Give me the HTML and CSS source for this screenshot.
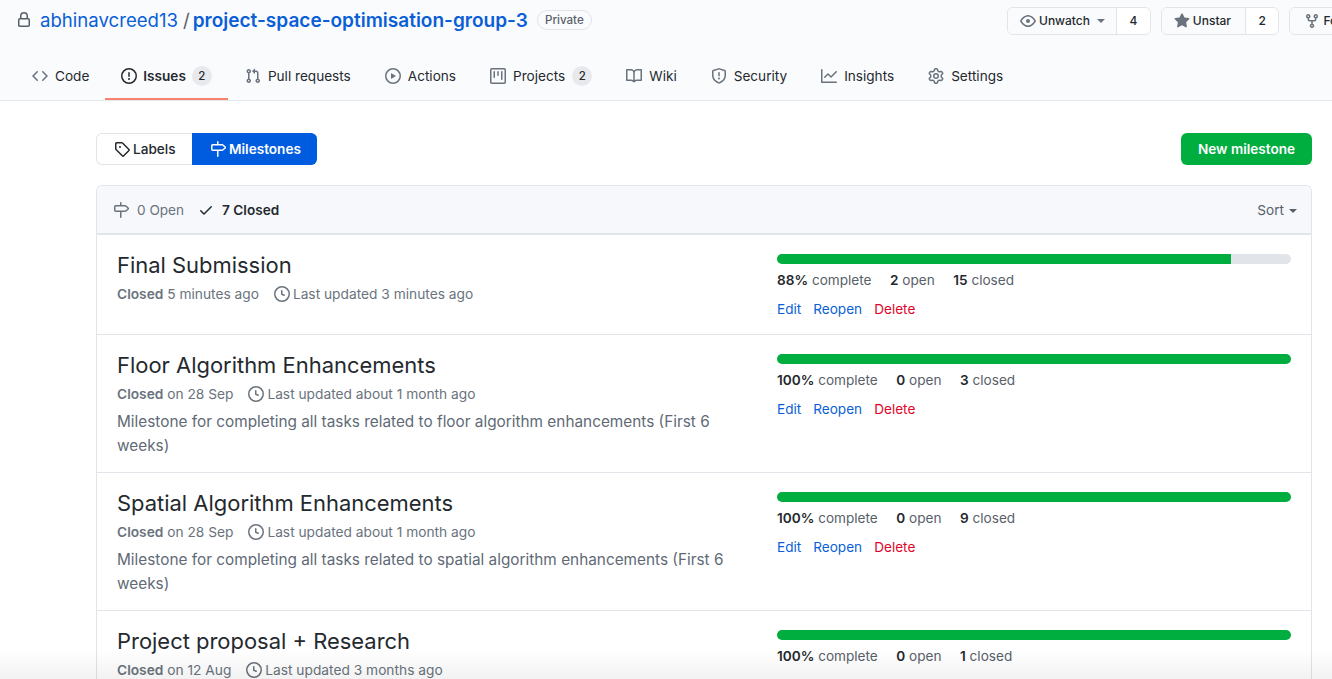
FILE: index.html
```html
<!DOCTYPE html>
<html lang="en">
<head>
    <meta charset="UTF-8">
    <meta name="viewport" content="width=device-width, initial-scale=1.0">
    <title>Milestones</title>
    <link rel="stylesheet" href="styles.css">
</head>
<body>
    <svg class="sprites" width="0" height="0">
        <symbol id="i-lock" viewBox="0 0 16 16"><path fill-rule="evenodd" d="M4 4v2h-.25A1.75 1.75 0 002 7.75v5.5c0 .966.784 1.75 1.75 1.75h8.5A1.75 1.75 0 0014 13.25v-5.5A1.75 1.75 0 0012.25 6H12V4a4 4 0 10-8 0zm6.5 2V4a2.5 2.5 0 00-5 0v2h5zM12 7.5h.25a.25.25 0 01.25.25v5.5a.25.25 0 01-.25.25h-8.5a.25.25 0 01-.25-.25v-5.5a.25.25 0 01.25-.25H12z"/></symbol>
        <symbol id="i-code" viewBox="0 0 16 16"><path fill-rule="evenodd" d="M4.72 3.22a.75.75 0 011.06 1.06L2.06 8l3.72 3.72a.75.75 0 11-1.06 1.06L.47 8.53a.75.75 0 010-1.06l4.25-4.25zm6.56 0a.75.75 0 10-1.06 1.06L13.94 8l-3.72 3.72a.75.75 0 101.06 1.06l4.25-4.25a.75.75 0 000-1.06l-4.25-4.25z"/></symbol>
        <symbol id="i-issue" viewBox="0 0 16 16"><path fill-rule="evenodd" d="M8 1.5a6.5 6.5 0 100 13 6.5 6.5 0 000-13zM0 8a8 8 0 1116 0A8 8 0 010 8zm9 3a1 1 0 11-2 0 1 1 0 012 0zm-.25-6.25a.75.75 0 00-1.5 0v3.5a.75.75 0 001.5 0v-3.5z"/></symbol>
        <symbol id="i-pr" viewBox="0 0 16 16"><path fill-rule="evenodd" d="M7.177 3.073L9.573.677A.25.25 0 0110 .854v4.792a.25.25 0 01-.427.177L7.177 3.427a.25.25 0 010-.354zM3.75 2.5a.75.75 0 100 1.5.75.75 0 000-1.5zm-2.25.75a2.25 2.25 0 113 2.122v5.256a2.251 2.251 0 11-1.5 0V5.372A2.25 2.25 0 011.5 3.25zM11 2.5h-1V4h1a1 1 0 011 1v5.628a2.251 2.251 0 101.5 0V5A2.5 2.5 0 0011 2.5zm1 10.25a.75.75 0 111.5 0 .75.75 0 01-1.5 0zM3.75 12a.75.75 0 100 1.5.75.75 0 000-1.5z"/></symbol>
        <symbol id="i-play" viewBox="0 0 16 16"><path fill-rule="evenodd" d="M1.5 8a6.5 6.5 0 1113 0 6.5 6.5 0 01-13 0zM8 0a8 8 0 100 16A8 8 0 008 0zM6.379 5.227A.25.25 0 006 5.442v5.117a.25.25 0 00.379.214l4.264-2.559a.25.25 0 000-.428L6.379 5.227z"/></symbol>
        <symbol id="i-project" viewBox="0 0 16 16"><path fill-rule="evenodd" d="M1.75 0A1.75 1.75 0 000 1.75v12.5C0 15.216.784 16 1.75 16h12.5A1.75 1.75 0 0016 14.25V1.75A1.75 1.75 0 0014.25 0H1.75zM1.5 1.75a.25.25 0 01.25-.25h12.5a.25.25 0 01.25.25v12.5a.25.25 0 01-.25.25H1.75a.25.25 0 01-.25-.25V1.75zM11.75 3a.75.75 0 00-.75.75v7.5a.75.75 0 001.5 0v-7.5a.75.75 0 00-.75-.75zm-8.25.75a.75.75 0 011.5 0v5.5a.75.75 0 01-1.5 0v-5.5zM8 3a.75.75 0 00-.75.75v3.5a.75.75 0 001.5 0v-3.5A.75.75 0 008 3z"/></symbol>
        <symbol id="i-book" viewBox="0 0 16 16"><path fill-rule="evenodd" d="M0 1.75A.75.75 0 01.75 1h4.253c1.227 0 2.317.59 3 1.501A3.744 3.744 0 0111.006 1h4.245a.75.75 0 01.75.75v10.5a.75.75 0 01-.75.75h-4.507a2.25 2.25 0 00-1.591.659l-.622.621a.75.75 0 01-1.06 0l-.622-.621A2.25 2.25 0 005.258 13H.75a.75.75 0 01-.75-.75V1.75zm8.755 3a2.25 2.25 0 012.25-2.25H14.5v9h-3.757c-.71 0-1.4.201-1.992.572l.004-7.322zm-1.504 7.324l.004-5.073-.002-2.253A2.25 2.25 0 005.003 2.5H1.5v9h3.757a3.75 3.75 0 011.994.574z"/></symbol>
        <symbol id="i-shield" viewBox="0 0 16 16"><path fill-rule="evenodd" d="M7.467.133a1.75 1.75 0 011.066 0l5.25 1.68A1.75 1.75 0 0115 3.48V7c0 1.566-.32 3.182-1.303 4.682-.983 1.498-2.585 2.813-5.032 3.855a1.7 1.7 0 01-1.33 0c-2.447-1.042-4.049-2.357-5.032-3.855C1.32 10.182 1 8.566 1 7V3.48a1.75 1.75 0 011.217-1.667l5.25-1.68zm.61 1.429a.25.25 0 00-.153 0l-5.25 1.68a.25.25 0 00-.174.238V7c0 1.358.275 2.666 1.057 3.86.784 1.194 2.121 2.34 4.366 3.297a.2.2 0 00.154 0c2.245-.956 3.582-2.104 4.366-3.298C13.225 9.666 13.5 8.36 13.5 7V3.48a.25.25 0 00-.174-.237l-5.25-1.68zM9 10.5a1 1 0 11-2 0 1 1 0 012 0zm-.25-5.75a.75.75 0 10-1.5 0v3a.75.75 0 001.5 0v-3z"/></symbol>
        <symbol id="i-graph" viewBox="0 0 16 16"><path fill-rule="evenodd" d="M1.5 1.75a.75.75 0 00-1.5 0v12.5c0 .414.336.75.75.75h14.5a.75.75 0 000-1.5H1.5V1.75zm14.28 2.53a.75.75 0 00-1.06-1.06L10 7.94 7.53 5.47a.75.75 0 00-1.06 0L3.22 8.72a.75.75 0 001.06 1.06L7 7.06l2.47 2.47a.75.75 0 001.06 0l5.25-5.25z"/></symbol>
        <symbol id="i-gear" viewBox="0 0 16 16"><path fill-rule="evenodd" d="M7.429 1.525a6.593 6.593 0 011.142 0c.036.003.108.036.137.146l.289 1.105c.147.56.55.967.997 1.189.174.086.341.183.501.29.417.278.97.423 1.53.27l1.102-.303c.11-.03.175.016.195.046.219.31.41.641.573.989.014.031.022.11-.059.19l-.815.806c-.411.406-.562.957-.53 1.456a4.588 4.588 0 010 .582c-.032.499.119 1.05.53 1.456l.815.806c.08.08.073.159.059.19a6.494 6.494 0 01-.573.99c-.02.029-.086.074-.195.045l-1.103-.303c-.559-.153-1.112-.008-1.529.27-.16.107-.327.204-.5.29-.449.222-.851.628-.998 1.189l-.289 1.105c-.029.11-.101.143-.137.146a6.613 6.613 0 01-1.142 0c-.036-.003-.108-.037-.137-.146l-.289-1.105c-.147-.56-.55-.967-.997-1.189a4.502 4.502 0 01-.501-.29c-.417-.278-.97-.423-1.53-.27l-1.102.303c-.11.03-.175-.016-.195-.046a6.492 6.492 0 01-.573-.989c-.014-.031-.022-.11.059-.19l.815-.806c.411-.406.562-.957.53-1.456a4.587 4.587 0 010-.582c.032-.499-.119-1.05-.53-1.456l-.815-.806c-.08-.08-.073-.159-.059-.19a6.44 6.44 0 01.573-.99c.02-.029.086-.075.195-.045l1.103.303c.559.153 1.112.008 1.529-.27.16-.107.327-.204.5-.29.449-.222.851-.628.998-1.189l.289-1.105c.029-.11.101-.143.137-.146zM8 0c-.236 0-.47.01-.701.03-.743.065-1.29.615-1.458 1.261l-.29 1.106c-.017.066-.078.158-.211.224a5.994 5.994 0 00-.668.386c-.123.082-.233.09-.3.071L3.27 2.776c-.644-.177-1.392.02-1.82.63a7.977 7.977 0 00-.704 1.217c-.315.675-.111 1.422.363 1.891l.815.806c.05.048.098.147.088.294a6.084 6.084 0 000 .772c.01.147-.038.246-.088.294l-.815.806c-.474.469-.678 1.216-.363 1.891.2.428.436.835.704 1.218.428.609 1.176.806 1.82.63l1.103-.303c.066-.019.176-.011.299.071.213.143.436.272.668.386.133.066.194.158.212.224l.289 1.106c.169.646.715 1.196 1.458 1.26a8.094 8.094 0 001.402 0c.743-.064 1.29-.614 1.458-1.26l.29-1.106c.017-.066.078-.158.211-.224a5.98 5.98 0 00.668-.386c.123-.082.233-.09.3-.071l1.102.302c.644.177 1.392-.02 1.82-.63.268-.382.505-.789.704-1.217.315-.675.111-1.422-.364-1.891l-.814-.806c-.05-.048-.098-.147-.088-.294a6.1 6.1 0 000-.772c-.01-.147.039-.246.088-.294l.814-.806c.475-.469.679-1.216.364-1.891a7.992 7.992 0 00-.704-1.218c-.428-.609-1.176-.806-1.82-.63l-1.103.303c-.066.019-.176.011-.299-.071a5.991 5.991 0 00-.668-.386c-.133-.066-.194-.158-.212-.224L10.16 1.29C9.99.645 9.444.095 8.701.031A8.094 8.094 0 008 0zm1.5 8a1.5 1.5 0 11-3 0 1.5 1.5 0 013 0zM11 8a3 3 0 11-6 0 3 3 0 016 0z"/></symbol>
        <symbol id="i-eye" viewBox="0 0 16 16"><path fill-rule="evenodd" d="M1.679 7.932c.412-.621 1.242-1.75 2.366-2.717C5.175 4.242 6.527 3.5 8 3.5c1.473 0 2.824.742 3.955 1.715 1.124.967 1.954 2.096 2.366 2.717a.119.119 0 010 .136c-.412.621-1.242 1.75-2.366 2.717C10.825 11.758 9.473 12.5 8 12.5c-1.473 0-2.824-.742-3.955-1.715C2.92 9.818 2.09 8.69 1.679 8.068a.119.119 0 010-.136zM8 2c-1.981 0-3.67.992-4.933 2.078C1.797 5.169.88 6.423.43 7.1a1.619 1.619 0 000 1.798c.45.678 1.367 1.932 2.637 3.024C4.329 13.008 6.019 14 8 14c1.981 0 3.67-.992 4.933-2.078 1.27-1.091 2.187-2.345 2.637-3.023a1.619 1.619 0 000-1.798c-.45-.678-1.367-1.932-2.637-3.023C11.671 2.992 9.981 2 8 2zm0 8a2 2 0 100-4 2 2 0 000 4z"/></symbol>
        <symbol id="i-star" viewBox="0 0 16 16"><path fill-rule="evenodd" d="M8 .25a.75.75 0 01.673.418l1.882 3.815 4.21.612a.75.75 0 01.416 1.279l-3.046 2.97.719 4.192a.75.75 0 01-1.088.791L8 12.347l-3.766 1.98a.75.75 0 01-1.088-.79l.72-4.194L.818 6.374a.75.75 0 01.416-1.28l4.21-.611L7.327.668A.75.75 0 018 .25z"/></symbol>
        <symbol id="i-fork" viewBox="0 0 16 16"><path fill-rule="evenodd" d="M5 3.25a.75.75 0 11-1.5 0 .75.75 0 011.5 0zm0 2.122a2.25 2.25 0 10-1.5 0v.878A2.25 2.25 0 005.75 8.5h1.5v2.128a2.251 2.251 0 101.5 0V8.5h1.5a2.25 2.25 0 002.25-2.25v-.878a2.25 2.25 0 10-1.5 0v.878a.75.75 0 01-.75.75h-4.5A.75.75 0 015 6.25v-.878zm3.75 7.378a.75.75 0 11-1.5 0 .75.75 0 011.5 0zm3-8.75a.75.75 0 100-1.5.75.75 0 000 1.5z"/></symbol>
        <symbol id="i-tag" viewBox="0 0 16 16"><path fill-rule="evenodd" d="M2.5 7.775V2.75a.25.25 0 01.25-.25h5.025a.25.25 0 01.177.073l6.25 6.25a.25.25 0 010 .354l-5.025 5.025a.25.25 0 01-.354 0l-6.25-6.25a.25.25 0 01-.073-.177zm-1.5 0V2.75C1 1.784 1.784 1 2.75 1h5.025c.464 0 .91.184 1.238.513l6.25 6.25a1.75 1.75 0 010 2.474l-5.026 5.026a1.75 1.75 0 01-2.474 0l-6.25-6.25A1.75 1.75 0 011 7.775zM6 5a1 1 0 100 2 1 1 0 000-2z"/></symbol>
        <symbol id="i-milestone" viewBox="0 0 16 16"><path fill-rule="evenodd" d="M7.75 0a.75.75 0 01.75.75V3h3.634c.414 0 .814.147 1.13.414l2.07 1.75a1.75 1.75 0 010 2.672l-2.07 1.75a1.75 1.75 0 01-1.13.414H8.5v5.25a.75.75 0 11-1.5 0V10H2.75A1.75 1.75 0 011 8.25v-3.5C1 3.784 1.784 3 2.75 3H7V.75A.75.75 0 017.75 0zm0 8.5h4.384a.25.25 0 00.161-.06l2.07-1.75a.25.25 0 000-.38l-2.07-1.75a.25.25 0 00-.161-.06H2.75a.25.25 0 00-.25.25v3.5c0 .138.112.25.25.25h5z"/></symbol>
        <symbol id="i-check" viewBox="0 0 16 16"><path fill-rule="evenodd" d="M13.78 4.22a.75.75 0 010 1.06l-7.25 7.25a.75.75 0 01-1.06 0L2.22 9.28a.75.75 0 011.06-1.06L6 10.94l6.72-6.72a.75.75 0 011.06 0z"/></symbol>
        <symbol id="i-clock" viewBox="0 0 16 16"><path fill-rule="evenodd" d="M1.5 8a6.5 6.5 0 1113 0 6.5 6.5 0 01-13 0zM8 0a8 8 0 100 16A8 8 0 008 0zm.5 4.75a.75.75 0 00-1.5 0v3.5a.75.75 0 00.471.696l2.5 1a.75.75 0 00.557-1.392L8.5 7.742V4.75z"/></symbol>
    </svg>

    <header class="repo-head">
        <div class="repo-top">
            <h1 class="repo-title">
                <svg class="icon"><use href="#i-lock"/></svg>
                <a class="owner" href="#">abhinavcreed13</a>
                <span class="slash">/</span>
                <a class="repo-name" href="#">project-space-optimisation-group-3</a>
                <span class="private">Private</span>
            </h1>
            <ul class="repo-actions">
                <li class="action">
                    <span class="action-btn"><svg class="icon"><use href="#i-eye"/></svg>Unwatch<i class="caret"></i></span>
                    <span class="action-count">4</span>
                </li>
                <li class="action">
                    <span class="action-btn"><svg class="icon"><use href="#i-star"/></svg>Unstar</span>
                    <span class="action-count">2</span>
                </li>
                <li class="action">
                    <span class="action-btn fork"><svg class="icon"><use href="#i-fork"/></svg>Fork</span>
                    <span class="action-count">0</span>
                </li>
            </ul>
        </div>
        <nav class="repo-nav">
            <a class="tab" href="#"><svg class="icon"><use href="#i-code"/></svg>Code</a>
            <a class="tab selected" href="#"><svg class="icon"><use href="#i-issue"/></svg>Issues<span class="counter">2</span></a>
            <a class="tab" href="#"><svg class="icon"><use href="#i-pr"/></svg>Pull requests</a>
            <a class="tab" href="#"><svg class="icon"><use href="#i-play"/></svg>Actions</a>
            <a class="tab" href="#"><svg class="icon"><use href="#i-project"/></svg>Projects<span class="counter">2</span></a>
            <a class="tab" href="#"><svg class="icon"><use href="#i-book"/></svg>Wiki</a>
            <a class="tab" href="#"><svg class="icon"><use href="#i-shield"/></svg>Security</a>
            <a class="tab" href="#"><svg class="icon"><use href="#i-graph"/></svg>Insights</a>
            <a class="tab" href="#"><svg class="icon"><use href="#i-gear"/></svg>Settings</a>
        </nav>
    </header>

    <main class="content">
        <div class="toolbar">
            <div class="subnav">
                <a class="subnav-item" href="#"><svg class="icon"><use href="#i-tag"/></svg>Labels</a>
                <a class="subnav-item active" href="#"><svg class="icon"><use href="#i-milestone"/></svg>Milestones</a>
            </div>
            <a class="btn-primary" href="#">New milestone</a>
        </div>

        <section class="box">
            <div class="box-header">
                <a class="state" href="#"><svg class="icon"><use href="#i-milestone"/></svg>0 Open</a>
                <a class="state current" href="#"><svg class="icon"><use href="#i-check"/></svg>7 Closed</a>
                <span class="sort">Sort<i class="caret"></i></span>
            </div>

            <article class="milestone">
                <div class="ms-left">
                    <h2 class="ms-title">Final Submission</h2>
                    <p class="ms-meta"><strong>Closed</strong> 5 minutes ago <span class="updated"><svg class="icon"><use href="#i-clock"/></svg>Last updated 3 minutes ago</span></p>
                </div>
                <div class="ms-right">
                    <div class="progress"><span class="progress-fill" style="width: 88.3%"></span></div>
                    <p class="stats"><span><b>88%</b> complete</span><span><b>2</b> open</span><span><b>15</b> closed</span></p>
                    <p class="links"><a href="#">Edit</a><a href="#">Reopen</a><a class="danger" href="#">Delete</a></p>
                </div>
            </article>

            <article class="milestone">
                <div class="ms-left">
                    <h2 class="ms-title">Floor Algorithm Enhancements</h2>
                    <p class="ms-meta"><strong>Closed</strong> on 28 Sep <span class="updated"><svg class="icon"><use href="#i-clock"/></svg>Last updated about 1 month ago</span></p>
                    <p class="ms-desc">Milestone for completing all tasks related to floor algorithm enhancements (First 6 weeks)</p>
                </div>
                <div class="ms-right">
                    <div class="progress"><span class="progress-fill" style="width: 100%"></span></div>
                    <p class="stats"><span><b>100%</b> complete</span><span><b>0</b> open</span><span><b>3</b> closed</span></p>
                    <p class="links"><a href="#">Edit</a><a href="#">Reopen</a><a class="danger" href="#">Delete</a></p>
                </div>
            </article>

            <article class="milestone">
                <div class="ms-left">
                    <h2 class="ms-title">Spatial Algorithm Enhancements</h2>
                    <p class="ms-meta"><strong>Closed</strong> on 28 Sep <span class="updated"><svg class="icon"><use href="#i-clock"/></svg>Last updated about 1 month ago</span></p>
                    <p class="ms-desc">Milestone for completing all tasks related to spatial algorithm enhancements (First 6 weeks)</p>
                </div>
                <div class="ms-right">
                    <div class="progress"><span class="progress-fill" style="width: 100%"></span></div>
                    <p class="stats"><span><b>100%</b> complete</span><span><b>0</b> open</span><span><b>9</b> closed</span></p>
                    <p class="links"><a href="#">Edit</a><a href="#">Reopen</a><a class="danger" href="#">Delete</a></p>
                </div>
            </article>

            <article class="milestone">
                <div class="ms-left">
                    <h2 class="ms-title">Project proposal + Research</h2>
                    <p class="ms-meta"><strong>Closed</strong> on 12 Aug <span class="updated"><svg class="icon"><use href="#i-clock"/></svg>Last updated 3 months ago</span></p>
                </div>
                <div class="ms-right">
                    <div class="progress"><span class="progress-fill" style="width: 100%"></span></div>
                    <p class="stats"><span><b>100%</b> complete</span><span><b>0</b> open</span><span><b>1</b> closed</span></p>
                </div>
            </article>
        </section>
    </main>

    <div class="bottom-fade"></div>
</body>
</html>
```

FILE: styles.css
```css
html, body {
    height: 100%;
}

body {
    margin: 0;
    overflow: hidden;
    font-family: Inter, "Liberation Sans", sans-serif;
    font-size: 13.6px;
    color: #24292e;
    background-color: #fff;
}

a {
    text-decoration: none;
    color: inherit;
}

p, h1, h2, ul {
    margin: 0;
    padding: 0;
}

.sprites {
    position: absolute;
}

.icon {
    width: 16px;
    height: 16px;
    fill: currentColor;
    flex: none;
}

.caret {
    display: inline-block;
    width: 0;
    height: 0;
    border-top: 4px solid currentColor;
    border-left: 4px solid transparent;
    border-right: 4px solid transparent;
}

/* repo header */
.repo-head {
    height: 100px;
    background-color: #fafbfd;
    border-bottom: 1px solid #e6e8ec;
}

.repo-top {
    display: flex;
    align-items: flex-start;
    height: 55px;
    padding-left: 16px;
    overflow: hidden;
    white-space: nowrap;
}

.repo-title {
    display: flex;
    align-items: center;
    flex: none;
    width: 991px;
    height: 40px;
    font-size: 18.6px;
    font-weight: 400;
}

.repo-title .icon {
    color: #586069;
    margin-right: 8px;
}

.owner, .repo-name {
    color: #0a5fd6;
}

.repo-name {
    font-size: 19.05px;
    font-weight: 600;
}

.slash {
    margin: 0 3px 0 5px;
    color: #586069;
}

.private {
    margin-left: 9px;
    padding: 0 7px;
    font-size: 11.6px;
    font-weight: 500;
    line-height: 18px;
    color: #586069;
    border: 1px solid #e1e4e8;
    border-radius: 10px;
}

.repo-actions {
    display: flex;
    flex: none;
    gap: 10px;
    list-style: none;
    padding-top: 7px;
}

.action {
    display: flex;
    height: 28px;
    font-size: 12px;
    font-weight: 500;
    line-height: 26px;
    box-sizing: border-box;
    border: 1px solid #e1e4e8;
    border-radius: 6px;
    overflow: hidden;
}

.action-btn {
    display: flex;
    align-items: center;
    padding: 0 14px 0 12px;
    background-color: #fafbfc;
}

.action-btn.fork {
    padding-left: 14px;
}

.action-btn .icon {
    margin-right: 3px;
    color: #6a737d;
}

.action-btn .caret {
    color: #6a737d;
    margin-left: 7px;
    margin-right: -3px;
}

.action-count {
    padding: 0 12.5px;
    background-color: #fff;
    border-left: 1px solid #e1e4e8;
}

.repo-nav {
    display: flex;
    gap: 2px;
    padding-left: 16px;
    white-space: nowrap;
}

.tab {
    display: flex;
    align-items: center;
    gap: 7px;
    height: 45px;
    box-sizing: border-box;
    padding: 0 16px 2px;
    border-bottom: 2px solid transparent;
}

.tab .icon {
    color: #6a737d;
}

.tab.selected {
    gap: 6px;
    margin-left: -2px;
    font-weight: 600;
    border-bottom-color: #f9826c;
}

.tab.selected + .tab {
    margin-left: -1px;
}

.tab.selected .icon {
    color: #24292e;
}

.counter {
    min-width: 20px;
    box-sizing: border-box;
    padding: 0 6px;
    font-size: 11.5px;
    font-weight: 500;
    line-height: 20px;
    text-align: center;
    background-color: #e7e9ec;
    border-radius: 10px;
}

/* main */
.content {
    padding: 32px 20px 0 96px;
}

.toolbar {
    display: flex;
    justify-content: space-between;
    margin-bottom: 20px;
}

.subnav {
    display: flex;
    height: 32px;
}

.subnav-item {
    display: flex;
    align-items: center;
    gap: 3px;
    box-sizing: border-box;
    width: 96px;
    padding-left: 17px;
    font-weight: 500;
    background-color: #fff;
    border: 1px solid #e1e4e8;
    border-right: 0;
    border-radius: 6px 0 0 6px;
}

.subnav-item.active {
    width: 125px;
    font-weight: 600;
    color: #fff;
    background-color: #005cdf;
    border-color: #005cdf;
    border-radius: 0 6px 6px 0;
}

.btn-primary {
    width: 131px;
    height: 32px;
    font-weight: 600;
    line-height: 32px;
    text-align: center;
    color: #fff;
    background-color: #00ad3f;
    border-radius: 6px;
}

.box {
    border: 1px solid #e1e4e8;
    border-bottom: 0;
    border-radius: 6px 6px 0 0;
}

.box-header {
    display: flex;
    align-items: center;
    gap: 14px;
    height: 47px;
    padding: 0 14px 0 16px;
    background-color: #f6f8fb;
    border-bottom: 2px solid #e1e4e8;
    border-radius: 6px 6px 0 0;
}

.state {
    display: flex;
    align-items: center;
    gap: 8px;
    color: #6a737d;
}

.state.current {
    font-weight: 600;
    color: #24292e;
}

.sort {
    margin-left: auto;
    color: #586069;
}

.sort .caret {
    margin-left: 5px;
    vertical-align: middle;
}

.milestone {
    display: grid;
    grid-template-columns: 660px 514px;
    padding: 19px 20px 14px;
    border-bottom: 1px solid #e1e4e8;
}

.ms-left {
    padding-right: 30px;
}

.ms-title {
    font-size: 21.95px;
    font-weight: 400;
    line-height: 22px;
    margin-bottom: 8px;
}

.ms-meta {
    font-size: 13.75px;
    line-height: 20px;
    color: #6a737d;
}

.ms-meta strong {
    font-weight: 600;
}

.updated {
    display: inline-flex;
    align-items: center;
    gap: 3px;
    margin-left: 11px;
    vertical-align: top;
}

.ms-desc {
    margin-top: 6px;
    font-size: 15.35px;
    line-height: 24px;
    color: #5f6a76;
}

.progress {
    height: 10px;
    background-color: #e1e4e8;
    border-radius: 5px;
    overflow: hidden;
}

.progress-fill {
    display: block;
    height: 100%;
    background-color: #00ad3f;
}

.stats {
    display: flex;
    gap: 18.5px;
    margin-top: 6px;
    line-height: 20px;
    color: #586069;
}

.stats b {
    font-weight: 600;
    color: #24292e;
}

.links {
    display: flex;
    gap: 12px;
    margin-top: 9px;
    margin-bottom: 1px;
    line-height: 20px;
    color: #0a5fd6;
}

.links .danger {
    color: #e0052b;
}

.bottom-fade {
    position: fixed;
    left: 0;
    right: 0;
    bottom: 0;
    height: 30px;
    background: linear-gradient(rgba(0, 0, 0, 0), rgba(0, 0, 0, 0.05));
    pointer-events: none;
}
```
